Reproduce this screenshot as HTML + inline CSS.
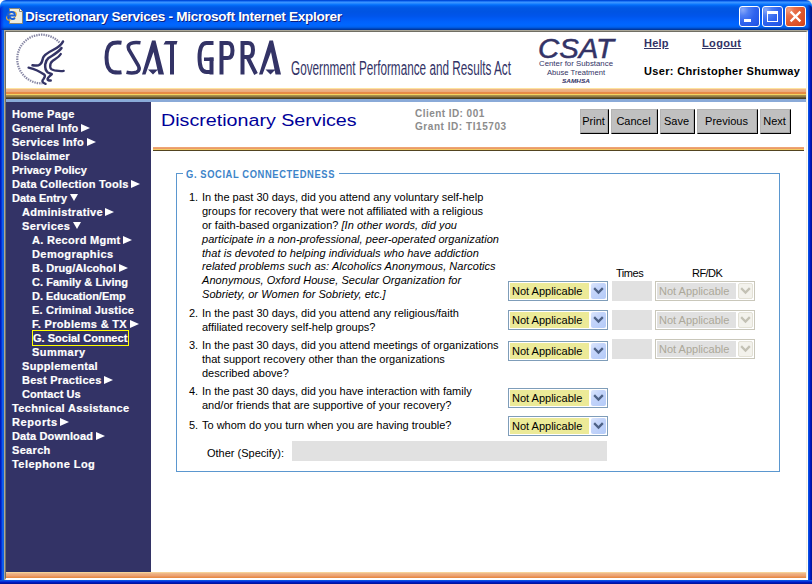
<!DOCTYPE html>
<html><head><meta charset="utf-8">
<style>
*,*:before,*:after{margin:0;padding:0;box-sizing:border-box}
html,body{width:812px;height:584px;overflow:hidden;background:#fff;font-family:"Liberation Sans",sans-serif}
.abs{position:absolute}
#win{position:absolute;left:0;top:0;width:812px;height:584px;overflow:hidden}
#title{position:absolute;left:0;top:0;width:812px;height:30px;
background:linear-gradient(to bottom,#0040c8 0px,#0058ee 1px,#3d95ff 2px,#3590ff 3px,#127dff 4px,#036ffc 5px,#0262ee 6px,#0057e5 8px,#0054e3 12px,#0055eb 16px,#005bf5 19px,#0062fc 22px,#0066ff 25px,#0062ef 27px,#0052d6 28px,#0040ab 29px,#003092 30px);
border-radius:6px 6px 0 0}
#tt{position:absolute;left:25px;top:9px;font:bold 13.6px/16px "Liberation Sans",sans-serif;color:#fff;text-shadow:1px 1px 0 #0a1e80;letter-spacing:-0.3px;white-space:nowrap}
.bl{position:absolute;top:30px;width:4px;height:554px}
#bL{left:0;background:linear-gradient(to right,#001ea8 0,#0019cf 1px,#0a4ee6 2px,#166aee 3px,#0855dd 4px)}
#bR{left:808px;background:linear-gradient(to right,#0855dd 0,#0a4ee6 1px,#0019cf 2px,#00138c 4px)}
#bB{position:absolute;left:0;top:580px;width:812px;height:4px;background:linear-gradient(to bottom,#0855dd 0,#0a4ee6 1px,#0019cf 2px,#00138c 4px)}
#frame{position:absolute;left:4px;top:30px;width:804px;height:550px;background:#fff;border-top:1px solid #aca899;border-left:1px solid #aca899}
#frame2{position:absolute;left:5px;top:31px;width:803px;height:549px;border-top:1px solid #716f64;border-left:1px solid #716f64;border-right:2px solid #fff;border-bottom:2px solid #fff}
#frame2:after{content:"";position:absolute;right:-1px;top:0;width:1px;height:100%;background:#f1efe2}
.tbtn{position:absolute;top:6px;width:21px;height:21px;border:1px solid #fff;border-radius:3px;
background:radial-gradient(circle at 15% 15%,#8aaaf8 0,#4f7ff4 25%,#2f63ee 55%,#2458e8 85%,#1a48d0 100%)}
.tbtn.close{background:radial-gradient(circle at 15% 15%,#f4a080 0,#e8704a 25%,#e05a30 55%,#d84a20 85%,#c03a10 100%)}
#content{position:absolute;left:6px;top:32px;width:800px;height:546px;background:#fff;overflow:hidden}
/* stripes */
#stripe1{position:absolute;left:0;top:56px;width:800px;height:14px;
background:linear-gradient(to bottom,#fde3a0 0,#fde3a0 1px,#efb88a 1px,#eaa97a 4px,#e88a4a 4px,#e68a40 6px,#f5d560 6px,#f0d060 7px,#b09850 7px,#8a7440 9px,#4a3e20 10px,#4a3e20 11px,#8aaad8 11px,#8aaad8 14px)}
#nav{position:absolute;left:0;top:70px;width:145px;height:470px;background:#333366}
#stripeB{position:absolute;left:0;top:540px;width:800px;height:6px;
background:linear-gradient(to bottom,#fde3a0 0,#f0c090 1px,#eeae80 2px,#eba070 4px,#e88a48 5px,#e68a40 6px)}
.nv{position:absolute;color:#fff;font:bold 11px/14px "Liberation Sans",sans-serif;letter-spacing:0.15px;white-space:nowrap;-webkit-text-stroke:0.2px #fff}
.ar{display:inline-block;width:0;height:0;border-top:4px solid transparent;border-bottom:4px solid transparent;border-left:9px solid #fff;margin-left:2.6px;vertical-align:0px}
.sel:before{content:"";position:absolute;left:-1px;top:-1px;width:97px;height:16px;border:1px solid #ffff00}
.hl{font:bold 11px/14px "Liberation Sans",sans-serif;color:#333366;text-decoration:underline;letter-spacing:0.2px}
.cid{font:bold 10px/12px "Liberation Sans",sans-serif;color:#8c8c8c;letter-spacing:0.45px;white-space:nowrap}
.btn{top:109px;height:25px;background:#c0c0c0;border-top:1px solid #b4b4b4;border-left:1px solid #b4b4b4;border-right:1px solid #000;border-bottom:1px solid #000;box-shadow:inset -1px -1px 0 #a8a8a8;font:11px/23px "Liberation Sans",sans-serif;color:#000;text-align:center;white-space:nowrap;padding-right:2px}
.q div{position:absolute;left:202px;font:11px/14px "Liberation Sans",sans-serif;color:#000;white-space:nowrap}
.q i{letter-spacing:0.05px}
.sl{left:508px;width:100px;height:20px;border:1px solid #7f9db9;background:#fff}
.sl span{position:absolute;left:1px;top:1px;width:79px;height:16px;background:#ecea98;font:11px/16px "Liberation Sans",sans-serif;color:#000;padding-left:2px;white-space:nowrap;overflow:hidden}
.sl b{position:absolute;left:82px;top:1px;width:15px;height:16px;border-radius:2px;background:linear-gradient(135deg,#dce6fc 0,#c3d4fa 40%,#b4cbf8 100%)}
.sl svg{position:absolute;left:0;top:0;stroke:#4d6185}
.sl.dis svg{left:-1px;top:-1px;stroke:#c3c1b4}
.sl.dis{left:655px;border-color:#c9c7ba}
.sl.dis span{background:#e1e1e1;color:#aca899}
.sl.dis b{background:#f3f2ec;border:1px solid #e3e1d6}
.ti{left:612px;width:40px;height:20px;background:#e1e1e1}
.dn{display:inline-block;width:0;height:0;border-left:4px solid transparent;border-right:4px solid transparent;border-top:7px solid #fff;margin-left:2.8px;vertical-align:1px}
</style></head><body>
<div id="win">
 <div class="abs" style="left:800px;top:0;width:12px;height:12px;background:#ece9d8"></div>
 <div id="title"></div>
 <div id="tt">Discretionary Services - Microsoft Internet Explorer</div>
 <div class="tbtn" style="left:739px"><i style="position:absolute;left:4px;top:12px;width:7px;height:3px;background:#fff"></i></div>
 <div class="tbtn" style="left:762px"><i style="position:absolute;left:4px;top:4px;width:11px;height:11px;border:1px solid #fff;border-top-width:3px"></i></div>
 <div class="tbtn close" style="left:785px"><svg style="position:absolute;left:0;top:0" width="19" height="19"><path d="M4.6 4.6 L14.4 14.4 M14.4 4.6 L4.6 14.4" stroke="#fff" stroke-width="2.2"/></svg></div>
 <svg class="abs" style="left:0;top:0" width="40" height="30">
  <path d="M9.5 8.5 L19.5 8.5 L22.5 11.5 L22.5 23.5 L9.5 23.5 Z" fill="#efede0" stroke="#8a8878" stroke-width="1"/>
  <path d="M19.5 8.5 L19.5 11.5 L22.5 11.5" fill="#fff" stroke="#8a8878" stroke-width="1"/>
  <ellipse cx="11.5" cy="16" rx="5.5" ry="3.2" fill="none" stroke="#f0b030" stroke-width="1.2" transform="rotate(-35 11.5 16)"/>
  <path d="M7.5 16.5 C7.5 13.5, 9.5 12, 11.5 12 C13.5 12, 15 13.5, 15 15.5 L9.5 15.5 M9.5 15.5 C9.5 18, 11 19, 12.5 19 C13.5 19, 14.5 18.5, 15 18" fill="none" stroke="#1a5fd8" stroke-width="1.8"/>
 </svg>
 <div class="abs" style="left:807px;top:5px;width:5px;height:25px;background:linear-gradient(to right,rgba(0,40,200,0) 0,rgba(0,30,160,0.5) 2px,#001a8a 4px);border-top-right-radius:4px"></div>
 <div class="abs" style="left:0;top:6px;width:4px;height:24px;background:linear-gradient(to right,#0019cf 0,rgba(0,40,220,0.6) 1.5px,rgba(0,60,240,0) 4px);border-top-left-radius:4px"></div>
 <div class="bl" id="bL"></div>
 <div class="bl" id="bR"></div>
 <div id="bB"></div>
 <div id="frame"></div>
 <div id="frame2"></div>
 <div id="content">
  <div id="stripe1"></div>
  <div id="nav">
  <div class="nv" style="top:5px;left:6px;letter-spacing:0.3px">Home Page</div>
  <div class="nv" style="top:19px;left:6px;letter-spacing:0.19px">General Info<i class="ar"></i></div>
  <div class="nv" style="top:33px;left:6px;letter-spacing:0.27px">Services Info<i class="ar"></i></div>
  <div class="nv" style="top:47px;left:6px;letter-spacing:0.21px">Disclaimer</div>
  <div class="nv" style="top:61px;left:6px;letter-spacing:0.02px">Privacy Policy</div>
  <div class="nv" style="top:75px;left:6px;letter-spacing:0.24px">Data Collection Tools<i class="ar"></i></div>
  <div class="nv" style="top:89px;left:6px;letter-spacing:0.0px">Data Entry<i class="dn"></i></div>
  <div class="nv" style="top:103px;left:16px;letter-spacing:0.32px">Administrative<i class="ar"></i></div>
  <div class="nv" style="top:117px;left:16px;letter-spacing:0.36px">Services<i class="dn"></i></div>
  <div class="nv" style="top:131px;left:26px;letter-spacing:0.3px">A. Record Mgmt<i class="ar"></i></div>
  <div class="nv" style="top:145px;left:26px;letter-spacing:0.43px">Demographics</div>
  <div class="nv" style="top:159px;left:26px;letter-spacing:0.06px">B. Drug/Alcohol<i class="ar"></i></div>
  <div class="nv" style="top:173px;left:26px;letter-spacing:0.04px">C. Family &amp; Living</div>
  <div class="nv" style="top:187px;left:26px;letter-spacing:-0.03px">D. Education/Emp</div>
  <div class="nv" style="top:201px;left:26px;letter-spacing:0.19px">E. Criminal Justice</div>
  <div class="nv" style="top:215px;left:26px;letter-spacing:0.32px">F. Problems &amp; TX<i class="ar"></i></div>
  <div class="nv sel" style="top:229px;left:27px;letter-spacing:0.01px">G. Social Connect</div>
  <div class="nv" style="top:243px;left:26px;letter-spacing:0.48px">Summary</div>
  <div class="nv" style="top:257px;left:16px;letter-spacing:0.32px">Supplemental</div>
  <div class="nv" style="top:271px;left:16px;letter-spacing:0.27px">Best Practices<i class="ar"></i></div>
  <div class="nv" style="top:285px;left:16px;letter-spacing:0.07px">Contact Us</div>
  <div class="nv" style="top:299px;left:6px;letter-spacing:0.34px">Technical Assistance</div>
  <div class="nv" style="top:313px;left:6px;letter-spacing:0.6px">Reports<i class="ar"></i></div>
  <div class="nv" style="top:327px;left:6px;letter-spacing:0.12px">Data Download<i class="ar"></i></div>
  <div class="nv" style="top:341px;left:6px;letter-spacing:0.32px">Search</div>
  <div class="nv" style="top:355px;left:6px;letter-spacing:0.45px">Telephone Log</div>
  </div>
  <div id="stripeB"></div>
 </div>

 <svg class="abs" style="left:0;top:0" width="812" height="100" viewBox="0 0 812 100">
  <g fill="none" stroke="#333366" stroke-linecap="round" stroke-linejoin="round">
   <path stroke-width="2.2" stroke-dasharray="1.4 1" stroke-linecap="butt" opacity="0.6" d="M59.4 42.5 A24.3 24.3 0 1 0 42.3 83.3"/>
   <path stroke-width="2.5" d="M63 41.5 C61 46, 57 48, 53 50 C48 52.5, 44 54.5, 43 58 C42 62, 41.5 64.5, 38.5 65.2 C36 65.6, 34 65.5, 32.5 65.3"/>
   <path stroke-width="2.5" d="M61.5 48 C59 52, 53 55, 48.5 58 C46 60, 45.5 62, 45.2 64.5 C45 67.5, 45.2 70, 47.5 72.2 C49 73.2, 51 73.5, 51.8 74.2 C50 76, 48 77, 47.6 79 C47.5 80.2, 49 80.6, 50.7 80.6"/>
   <path stroke-width="2.3" d="M60.8 54 C59 57.5, 55 59, 52.5 61 C50.5 62.5, 50 64.5, 50.2 67 C50.4 69, 52 70, 54.5 70.4 C57.5 70.8, 60.5 71.5, 63.7 70.8"/>
   <path stroke-width="2.4" d="M28.6 67.6 C34 69, 40 71.5, 44.2 74.5 C45.5 75.5, 45 77, 43.5 79 C42 80.5, 41.5 82.5, 45.5 83.8"/>
  </g>
  <g fill="#333366">
   <path d="M142 74.5 L152 40.5 L155.5 40.5 L164 74.5 L158.5 74.5 L153.5 52 L145.5 74.5 Z M148 69.5 L158 69.5 L153 74.5 Z"/>
   <path d="M165.5 41 L177.5 41 L176.5 44.5 L174 44.5 L174 74.5 L170 74.5 L170 44.5 L163.5 44.5 Z"/>
   <path d="M259 74.5 L269.5 40.5 L273 40.5 L281 74.5 L275.5 74.5 L271 52 L262.5 74.5 Z M265.5 69.5 L275.5 69.5 L270.5 74.5 Z"/>
   <rect x="219.5" y="41" width="4" height="33.5"/>
   <rect x="240.5" y="41" width="4" height="33.5"/>
   <rect x="204" y="57.5" width="9.5" height="3.5"/>
   <rect x="209.5" y="57.5" width="4" height="17"/>
  </g>
  <g fill="none" stroke="#333366">
   <path stroke-width="4" d="M121.5 42.8 C118 42.3, 115.5 42.5, 113 43 C108.5 44.5, 106.5 49.5, 106.5 57.5 C106.5 65.5, 108.5 70.5, 113 72 C115.5 72.5, 118 72.7, 121.5 72.2"/>
   <path stroke-width="3.6" d="M140.5 42.8 C136.5 42.2, 133 42.5, 131 43.3 C128.2 44.5, 127.8 47, 128.8 49.5 L138.3 65.5 C139.8 68.5, 139.3 71.2, 136.5 72.3 C133 73.3, 129.5 73, 126.5 72.3"/>
   <path stroke-width="4" d="M213.5 43 L206.5 43 C201.5 43, 199.5 48, 199.5 57.5 C199.5 67, 201.5 72, 206.5 72 L211.5 72"/>
   <path stroke-width="4" d="M221.5 43 L227.5 43 Q232.5 43 232.5 50.5 Q232.5 58 227.5 58 L221.5 58"/>
   <path stroke-width="4" d="M242.5 43 L248 43 Q253 43 253 50 Q253 57 248 57 L242.5 57 M247.5 57 L256 74"/>
  </g>
  <text x="291" y="75" font-family="Liberation Sans" font-size="19.6" fill="#333366" textLength="220" lengthAdjust="spacingAndGlyphs">Government Performance and Results Act</text>
  <text x="538" y="57.5" font-family="Liberation Sans" font-style="italic" font-size="27" fill="#333366" stroke="#333366" stroke-width="0.5" textLength="76" lengthAdjust="spacingAndGlyphs">CSAT</text>
  <text x="539" y="66" font-family="Liberation Sans" font-size="7" fill="#333366" textLength="74" lengthAdjust="spacingAndGlyphs">Center for Substance</text>
  <text x="547" y="75.2" font-family="Liberation Sans" font-size="7" fill="#333366" textLength="58" lengthAdjust="spacingAndGlyphs">Abuse Treatment</text>
  <text x="562" y="82.6" font-family="Liberation Sans" font-style="italic" font-weight="bold" font-size="5.5" fill="#333366" textLength="28" lengthAdjust="spacingAndGlyphs">SAMHSA</text>
 </svg>
 <div class="abs hl" style="left:644px;top:36px">Help</div>
 <div class="abs hl" style="left:702px;top:36px;letter-spacing:0.35px">Logout</div>
 <div class="abs" style="left:644px;top:64px;font:bold 11px/14px 'Liberation Sans',sans-serif;color:#000;letter-spacing:0.33px;white-space:nowrap">User: Christopher Shumway</div>
 <div class="abs" style="left:161px;top:111px;font:16.8px/20px 'Liberation Sans',sans-serif;color:#000099;white-space:nowrap;transform:scaleX(1.172);transform-origin:0 0">Discretionary Services</div>
 <div class="abs cid" style="left:415px;top:108px">Client ID: 001</div>
 <div class="abs cid" style="left:415px;top:121px;letter-spacing:0.55px">Grant ID: TI15703</div>
 <div class="abs btn" style="left:580px;width:29px">Print</div>
 <div class="abs btn" style="left:611px;width:47px">Cancel</div>
 <div class="abs btn" style="left:660px;width:35px">Save</div>
 <div class="abs btn" style="left:697px;width:61px">Previous</div>
 <div class="abs btn" style="left:760px;width:31px">Next</div>
 <div class="abs" style="left:153px;top:147px;width:651px;height:4px;background:linear-gradient(to bottom,#f0a878 0,#eda070 1px,#e89860 2px,#f5d068 2px,#f0c860 3px,#5a4a20 3px,#4a3e20 4px)"></div>
 <div class="abs" style="left:176px;top:173px;width:604px;height:299px;border:1px solid #5b97cf"></div>
 <div class="abs" style="left:183px;top:166px;width:156px;height:14px;background:#fff"></div>
 <div class="abs" style="left:186px;top:167px;font:bold 11px/14px 'Liberation Sans',sans-serif;color:#3d84c9;letter-spacing:0.72px;white-space:nowrap;transform:scaleX(0.85);transform-origin:0 0">G. SOCIAL CONNECTEDNESS</div>
 <div class="q">
  <div style="top:190px;left:189px">1.</div>
  <div style="top:190px">In the past 30 days, did you attend any voluntary self-help</div>
  <div style="top:204px">groups for recovery that were not affiliated with a religious</div>
  <div style="top:218px">or faith-based organization? <i>[In other words, did you</i></div>
  <div style="top:232px"><i>participate in a non-professional, peer-operated organization</i></div>
  <div style="top:246px"><i>that is devoted to helping individuals who have addiction</i></div>
  <div style="top:259px"><i>related problems such as: Alcoholics Anonymous, Narcotics</i></div>
  <div style="top:273px"><i>Anonymous, Oxford House, Secular Organization for</i></div>
  <div style="top:287px"><i>Sobriety, or Women for Sobriety, etc.]</i></div>
  <div style="top:306px;left:189px">2.</div>
  <div style="top:306px">In the past 30 days, did you attend any religious/faith</div>
  <div style="top:320px">affiliated recovery self-help groups?</div>
  <div style="top:338px;left:189px">3.</div>
  <div style="top:338px">In the past 30 days, did you attend meetings of organizations</div>
  <div style="top:352px">that support recovery other than the organizations</div>
  <div style="top:366px">described above?</div>
  <div style="top:384px;left:189px">4.</div>
  <div style="top:384px">In the past 30 days, did you have interaction with family</div>
  <div style="top:398px">and/or friends that are supportive of your recovery?</div>
  <div style="top:418px;left:189px">5.</div>
  <div style="top:418px">To whom do you turn when you are having trouble?</div>
  <div style="top:446px;left:207px">Other (Specify):</div>
  <div style="top:266px;left:616px;letter-spacing:-0.45px">Times</div>
  <div style="top:266px;left:692px;letter-spacing:-0.55px">RF/DK</div>
 </div>
 <div class="abs sl" style="top:281px"><span>Not Applicable</span><b><svg width="15" height="16"><path d="M4 6 L7.5 9.5 L11 6" fill="none" stroke-width="2.3" stroke-linecap="square"/></svg></b></div>
 <div class="abs sl" style="top:310px"><span>Not Applicable</span><b><svg width="15" height="16"><path d="M4 6 L7.5 9.5 L11 6" fill="none" stroke-width="2.3" stroke-linecap="square"/></svg></b></div>
 <div class="abs sl" style="top:341px"><span>Not Applicable</span><b><svg width="15" height="16"><path d="M4 6 L7.5 9.5 L11 6" fill="none" stroke-width="2.3" stroke-linecap="square"/></svg></b></div>
 <div class="abs sl" style="top:388px"><span>Not Applicable</span><b><svg width="15" height="16"><path d="M4 6 L7.5 9.5 L11 6" fill="none" stroke-width="2.3" stroke-linecap="square"/></svg></b></div>
 <div class="abs sl" style="top:416px"><span>Not Applicable</span><b><svg width="15" height="16"><path d="M4 6 L7.5 9.5 L11 6" fill="none" stroke-width="2.3" stroke-linecap="square"/></svg></b></div>
 <div class="abs ti" style="top:281px"></div>
 <div class="abs ti" style="top:310px"></div>
 <div class="abs ti" style="top:339px"></div>
 <div class="abs sl dis" style="top:281px"><span>Not Applicable</span><b><svg width="15" height="16"><path d="M4 6 L7.5 9.5 L11 6" fill="none" stroke-width="2.3" stroke-linecap="square"/></svg></b></div>
 <div class="abs sl dis" style="top:310px"><span>Not Applicable</span><b><svg width="15" height="16"><path d="M4 6 L7.5 9.5 L11 6" fill="none" stroke-width="2.3" stroke-linecap="square"/></svg></b></div>
 <div class="abs sl dis" style="top:339px"><span>Not Applicable</span><b><svg width="15" height="16"><path d="M4 6 L7.5 9.5 L11 6" fill="none" stroke-width="2.3" stroke-linecap="square"/></svg></b></div>
 <div class="abs" style="left:292px;top:441px;width:315px;height:20px;background:#e1e1e1"></div>
</div>
</body></html>
